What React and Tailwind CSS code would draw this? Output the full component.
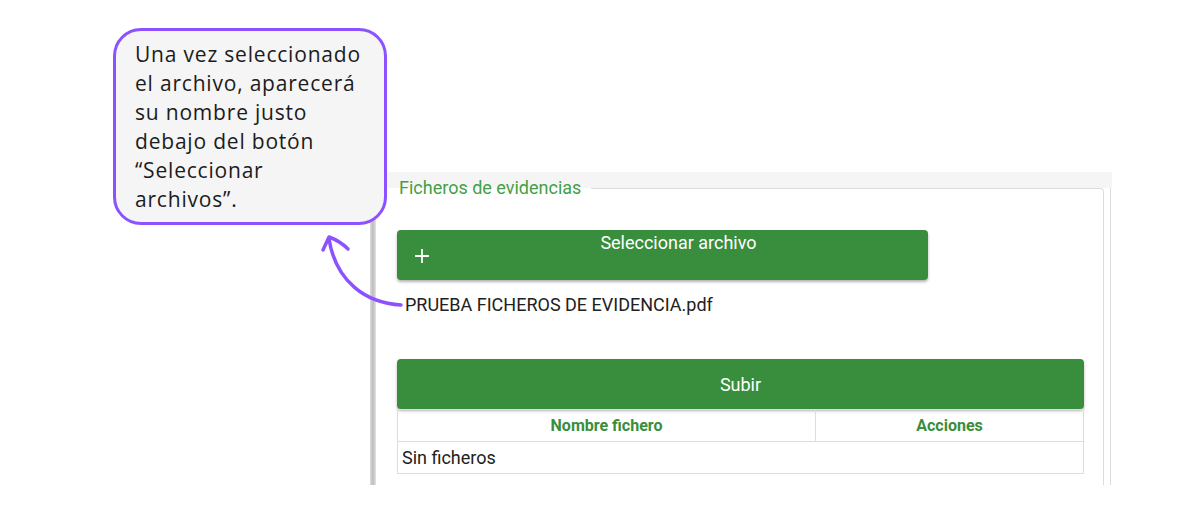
import React from 'react';

const roboto = { fontFamily: 'Roboto, "Liberation Sans", sans-serif' };

const PlusIcon = () => (
  <svg width="14" height="14" viewBox="0 0 14 14" aria-hidden="true">
    <path d="M7 1v12M1 7h12" stroke="#ffffff" strokeWidth="1.8" strokeLinecap="square" fill="none" />
  </svg>
);

const Callout = () => (
  <div
    className="absolute left-[113px] top-[28px] h-[197px] w-[274px] rounded-[28px] border-[3px] border-[#8c52ff] bg-[#f5f5f5] pl-[19px] pt-[9px] text-[21px] leading-[29px] tracking-[0.8px] text-[#1c1c1c]"
    style={{ fontFamily: '"Open Sans", "Noto Sans", sans-serif' }}
  >
    Una vez seleccionado
    <br />
    el archivo, aparecerá
    <br />
    su nombre justo
    <br />
    debajo del botón
    <br />
    “Seleccionar
    <br />
    archivos”.
  </div>
);

const Arrow = () => (
  <svg className="absolute left-0 top-0" width="1200" height="520" aria-hidden="true">
    <path
      d="M401 305 C 366 303, 336 282, 329 239"
      stroke="#8c52ff"
      strokeWidth="3.5"
      strokeLinecap="round"
      fill="none"
    />
    <path
      d="M323 250 L 329 237 Q 340 241, 348 249"
      stroke="#8c52ff"
      strokeWidth="3.5"
      strokeLinecap="round"
      strokeLinejoin="round"
      fill="none"
    />
  </svg>
);

const EvidencePanel = () => (
  <div className="flex h-[313px] w-[742px] bg-white" style={roboto}>
    <div className="w-[7px] bg-gradient-to-r from-[#dcdcdc] via-[#bdbdbd] to-[#e4e4e4]" />
    <div className="flex flex-1 flex-col">
      <div className="h-[16px] bg-[#f5f5f5]" />
      <div className="-mt-[10px] flex flex-1">
        <fieldset className="flex-1 rounded-tr-[4px] border-r border-t border-[#dcdcdc] pl-[21px] pr-[19px]">
          <legend className="-ml-[10px] pl-[12px] pr-[10px] text-[18px] leading-[20px] text-[#43a047]">
            Ficheros de evidencias
          </legend>
          <button
            type="button"
            className="mt-[32px] flex h-[50px] w-[531px] rounded-[4px] bg-[#388e3c] pl-[18px] text-white shadow-[0_2px_3px_rgba(0,0,0,0.3)]"
          >
            <span className="mt-[19px]">
              <PlusIcon />
            </span>
            <span className="flex-1 pt-[2px] text-center text-[18px] leading-[22px]">Seleccionar archivo</span>
          </button>
          <p className="ml-[8px] mt-[14px] text-[18px] leading-[22px] text-[#212121]">
            PRUEBA FICHEROS DE EVIDENCIA.pdf
          </p>
          <button
            type="button"
            className="mt-[43px] flex h-[50px] w-[687px] items-center justify-center rounded-[4px] bg-[#388e3c] text-[18px] text-white shadow-[0_2px_3px_rgba(0,0,0,0.3)]"
          >
            Subir
          </button>
          <table className="w-[687px] border-collapse border border-[#dddddd]">
            <thead>
              <tr className="h-[32px]">
                <th className="w-[418px] border border-[#dddddd] text-[16px] font-bold text-[#388e3c]">Nombre fichero</th>
                <th className="border border-[#dddddd] text-[16px] font-bold text-[#388e3c]">Acciones</th>
              </tr>
            </thead>
            <tbody>
              <tr className="h-[32px]">
                <td colSpan={2} className="border border-[#dddddd] pl-[4px] text-[18px] text-[#212121]">
                  Sin ficheros
                </td>
              </tr>
            </tbody>
          </table>
        </fieldset>
        <div className="flex w-[8px] justify-end pr-[1px] pt-[10px]">
          <div className="w-px bg-[#dcdcdc]" />
        </div>
      </div>
    </div>
  </div>
);

const App = () => (
  <div className="relative h-[520px] w-[1200px] overflow-hidden bg-white">
    <div className="ml-[370px] pt-[172px]">
      <EvidencePanel />
    </div>
    <Arrow />
    <Callout />
  </div>
);

export default App;
